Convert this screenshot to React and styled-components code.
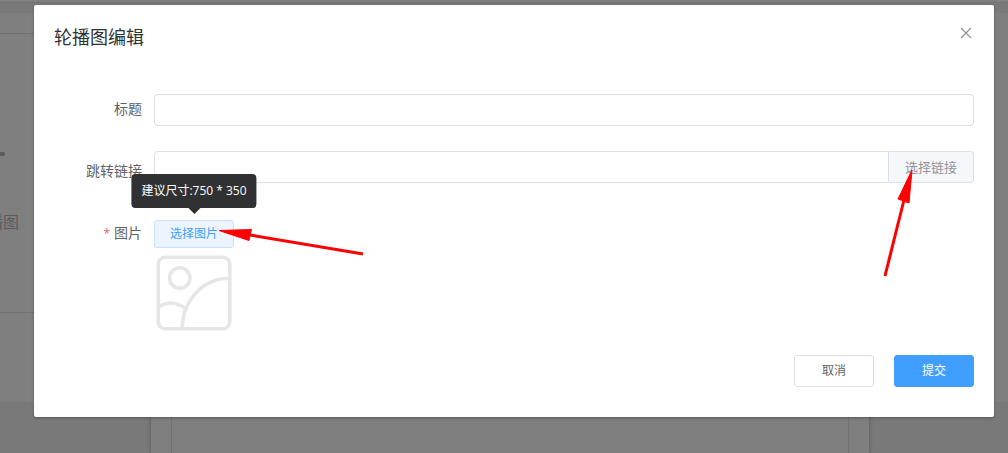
import React from "react";
import styled, { createGlobalStyle } from "styled-components";

const GlobalStyle = createGlobalStyle`
  *, *::before, *::after { box-sizing: border-box; }
  body {
    margin: 0;
    color: #606266;
    background: #f2f2f2;
    font-family: "Noto Sans", "Noto Sans CJK SC", sans-serif;
    font-size: 14px;
  }
  button, input { font-family: inherit; margin: 0; }
`;

const Screen = styled.div`
  position: relative;
  min-height: 100vh;
  overflow: hidden;
`;

/* Page that stays visible behind the modal */
const Page = styled.div`
  position: absolute;
  inset: 0;
  display: flex;
  flex-direction: column;
`;

const TopBar = styled.div`
  flex: none;
  height: 3px;
  background: #fff;
  border-bottom: 1px solid #e6e6e6;
`;

const Content = styled.div`
  flex: none;
  display: flex;
  height: 389px;
  margin-top: 10px;
  background: #fff;
`;

const Side = styled.aside`
  display: flex;
  flex-direction: column;
  width: 100px;
  padding-top: 20px;
`;

const SideCard = styled.div`
  display: flex;
  flex-direction: column;
  align-items: flex-start;
  height: 280px;
  padding-top: 118px;
  border-top: 1px solid #e4e4e4;
  border-bottom: 1px solid #e4e4e4;
`;

const SideMark = styled.span`
  width: 5px;
  height: 4px;
  border-radius: 0 2px 2px 0;
  background: #b4b6ba;
`;

const SideText = styled.span`
  display: flex;
  justify-content: flex-end;
  width: 19px;
  margin-top: 54px;
  overflow: hidden;
  color: #b4b6ba;
  font-size: 16px;
  line-height: 24px;
  white-space: nowrap;
`;

const Lower = styled.div`
  flex: 1;
  display: flex;
  padding: 0 139px 0 151px;
`;

const LowerCard = styled.div`
  flex: 1;
  display: flex;
  padding: 0 20px;
  background: #fff;
  box-shadow: 0 0 4px rgba(0, 0, 0, 0.3);
`;

const LowerInner = styled.div`
  flex: 1;
  border: solid #e4e7ed;
  border-width: 0 1px;
`;

const Overlay = styled.div`
  position: relative;
  min-height: 100vh;
  padding: 5px 14px 36px 34px;
  background: rgba(0, 0, 0, 0.5);
`;

const Dialog = styled.section`
  background: #fff;
  border-radius: 2px;
  box-shadow: 0 1px 3px rgba(0, 0, 0, 0.3);
`;

const Header = styled.header`
  display: flex;
  justify-content: space-between;
  align-items: flex-start;
  padding: 20px 20px 10px;
`;

const Title = styled.h1`
  margin: 0;
  color: #303133;
  font-size: 18px;
  font-weight: 400;
  line-height: 24px;
`;

const CloseButton = styled.button`
  display: flex;
  padding: 0;
  border: 0;
  background: none;
  color: #909399;
`;

const Form = styled.form`
  display: flex;
  flex-direction: column;
  gap: 22px;
  padding: 30px 20px;
`;

const Row = styled.div`
  display: flex;
  align-items: flex-start;
`;

const Label = styled.label`
  flex: none;
  width: 100px;
  padding-right: 12px;
  text-align: right;
  font-size: 14px;
  line-height: 40px;
`;

const Required = styled.span`
  margin-right: 4px;
  color: #f56c6c;
  font-size: 12px;
`;

const Control = styled.div`
  flex: 1;
  display: flex;
  flex-direction: column;
  align-items: flex-start;
  gap: 5px;
  min-width: 0;
  min-height: 40px;
  padding-top: ${(p) => p.$inset || 0}px;
`;

const InputGroup = styled.div`
  display: flex;
  width: 100%;
`;

const TextInput = styled.input`
  flex: 1;
  min-width: 0;
  height: 32px;
  padding: 0 15px;
  border: 1px solid #dcdfe6;
  border-radius: ${(p) => (p.$joined ? "4px 0 0 4px" : "4px")};
  background: #fff;
  color: #606266;
  font-size: 13px;
  outline: none;
`;

const Append = styled.button`
  position: relative;
  flex: none;
  height: 32px;
  padding: 0 16px;
  border: 1px solid #dcdfe6;
  border-left: 0;
  border-radius: 0 4px 4px 0;
  background: #f5f7fa;
  color: #909399;
  font-size: 13px;
  line-height: 30px;
`;

const Picker = styled.div`
  position: relative;
  display: flex;
`;

const buttonKinds = {
  plain: { border: "#c6e2ff", background: "#ecf5ff", color: "#409eff" },
  primary: { border: "#409eff", background: "#409eff", color: "#fff" },
  normal: { border: "#dcdfe6", background: "#fff", color: "#606266" },
};

const Button = styled.button`
  width: 80px;
  height: ${(p) => (p.$small ? 28 : 32)}px;
  padding: 0;
  border: 1px solid ${(p) => buttonKinds[p.$kind].border};
  border-radius: 3px;
  background: ${(p) => buttonKinds[p.$kind].background};
  color: ${(p) => buttonKinds[p.$kind].color};
  font-size: 12px;
  line-height: 1;
  white-space: nowrap;
`;

const Tooltip = styled.div`
  position: absolute;
  bottom: calc(100% + 12px);
  left: 50%;
  transform: translateX(-50%);
  padding: 8px 10px;
  border-radius: 4px;
  background: #303133;
  color: #fff;
  font-family: "Open Sans", "Noto Sans CJK SC", sans-serif;
  font-size: 12px;
  line-height: 18px;
  white-space: nowrap;

  &::after {
    content: "";
    position: absolute;
    top: 100%;
    left: 50%;
    margin-left: -6px;
    border: 6px solid transparent;
    border-top-color: #303133;
    border-bottom: 0;
  }
`;

const Pointer = styled.svg`
  position: absolute;
  top: ${(p) => p.$top}px;
  left: ${(p) => p.$left}px;
  z-index: 2;
  fill: #f00;
  stroke: #f00;
  pointer-events: none;
`;

const Footer = styled.footer`
  display: flex;
  justify-content: flex-end;
  gap: 20px;
`;

function CloseIcon() {
  return (
    <svg width="16" height="16" viewBox="0 0 16 16" fill="none" stroke="currentColor" strokeWidth="1.2">
      <path d="M3 3L13 13M13 3L3 13" />
    </svg>
  );
}

function PicturePlaceholder() {
  return (
    <svg width="80" height="80" viewBox="0 0 80 80" fill="none" stroke="#e6e6e6" strokeWidth="3.6" role="img" aria-label="图片">
      <rect x="4.2" y="4.2" width="71.6" height="71.6" rx="7" />
      <circle cx="25.8" cy="25" r="10.2" />
      <path d="M76 25.3C50 25.3 28.3 46 28.3 76" />
      <path d="M4.5 54.5C13 48.5 23 48.5 32 56" />
    </svg>
  );
}

export default function App() {
  return (
    <Screen>
      <GlobalStyle />
      <Page aria-hidden="true">
        <TopBar />
        <Content>
          <Side>
            <SideCard>
              <SideMark />
              <SideText>播图</SideText>
            </SideCard>
          </Side>
        </Content>
        <Lower>
          <LowerCard>
            <LowerInner />
          </LowerCard>
        </Lower>
      </Page>

      <Overlay>
        <Dialog role="dialog" aria-labelledby="dialog-title">
          <Header>
            <Title id="dialog-title">轮播图编辑</Title>
            <CloseButton type="button" aria-label="关闭">
              <CloseIcon />
            </CloseButton>
          </Header>
          <Form onSubmit={(e) => e.preventDefault()}>
            <Row>
              <Label htmlFor="title">标题</Label>
              <Control $inset={5}>
                <InputGroup>
                  <TextInput id="title" type="text" />
                </InputGroup>
              </Control>
            </Row>
            <Row>
              <Label htmlFor="link">跳转链接</Label>
              <Control>
                <InputGroup>
                  <TextInput id="link" type="text" $joined />
                  <Append type="button">
                    选择链接
                    <Pointer $top={14} $left={-8} width="36" height="112" viewBox="0 0 36 112">
                      <path d="M31 4L17 33L28 37Z" strokeWidth="1" />
                      <path d="M23 34L4 110" strokeWidth="3" />
                    </Pointer>
                  </Append>
                </InputGroup>
              </Control>
            </Row>
            <Row>
              <Label htmlFor="picture">
                <Required>*</Required>图片
              </Label>
              <Control $inset={7}>
                <Picker>
                  <Button id="picture" type="button" $kind="plain" $small aria-describedby="size-tip">
                    选择图片
                  </Button>
                  <Tooltip id="size-tip" role="tooltip">建议尺寸:750 * 350</Tooltip>
                  <Pointer $top={6} $left={62} width="150" height="32" viewBox="0 0 150 32">
                    <path d="M3 4.5L35.5 3.5L33 14.5Z" strokeWidth="1" />
                    <path d="M34 9L147 28" strokeWidth="3" />
                  </Pointer>
                </Picker>
                <PicturePlaceholder />
              </Control>
            </Row>
            <Footer>
              <Button type="button" $kind="normal">取消</Button>
              <Button type="submit" $kind="primary">提交</Button>
            </Footer>
          </Form>
        </Dialog>
      </Overlay>
    </Screen>
  );
}
